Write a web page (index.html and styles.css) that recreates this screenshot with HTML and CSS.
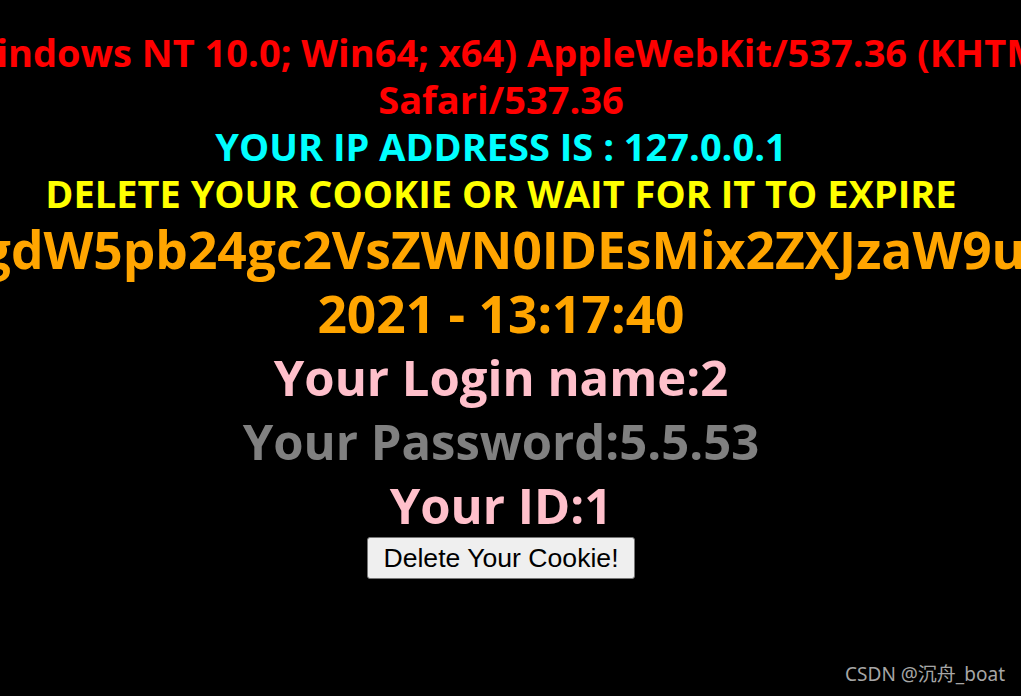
FILE: index.html
```html
<!DOCTYPE html>
<html lang="en">
<head>
<meta charset="utf-8">
<title>Less-21 Cookie Injection</title>
<link rel="stylesheet" href="styles.css">
</head>
<body>
<main class="page">
  <p class="line s4 red">YOUR USER AGENT IS : Mozilla/5.0 (Windows NT 10.0; Win64; x64) AppleWebKit/537.36 (KHTML, like Gecko) Chrome/91.0.4472.77</p>
  <p class="line s4 red">Safari/537.36</p>
  <p class="line s4 cyan">YOUR IP ADDRESS IS : 127.0.0.1</p>
  <p class="line s4 yellow">DELETE YOUR COOKIE OR WAIT FOR IT TO EXPIRE</p>
  <p class="line s5 orange">YOUR COOKIE : uname = JykgdW5pb24gc2VsZWN0IDEsMix2ZXJzaW9uKCkj and expires: Thu 15 Jul</p>
  <p class="line s5 orange">2021 - 13:17:40</p>
  <p class="line s5 pink">Your Login name:2</p>
  <p class="line s5 grey">Your Password:5.5.53</p>
  <p class="line s5 pink">Your ID:1</p>
  <form class="form">
    <button type="button" class="btn">Delete Your Cookie!</button>
  </form>
</main>
<div class="watermark">CSDN @沉舟_boat</div>
</body>
</html>
```
FILE: styles.css
```css
html, body {
  margin: 0;
  padding: 0;
  background: #000;
  overflow: hidden;
  height: 100%;
}
body {
  position: relative;
  font-family: "Open Sans", "Noto Sans", sans-serif;
}
.page {
  width: 3000px;
  margin-left: -999px;
  padding-top: 29px;
  text-align: center;
  font-weight: 700;
}
.line {
  margin: 0;
  white-space: nowrap;
}
.s4 {
  font-size: 38px;
  line-height: 47px;
}
.s5 {
  font-size: 49px;
  line-height: 64px;
}
.red { color: #ff0000; }
.cyan { color: #00ffff; }
.yellow { color: #ffff00; }
.orange {
  color: #ffa500;
  font-size: 51.5px;
}
.pink { color: #ffc0cb; }
.grey { color: #808080; }
.form {
  margin: 0;
  display: flex;
  justify-content: center;
}
.btn {
  font-family: "Liberation Sans", Arial, sans-serif;
  font-weight: 400;
  font-size: 26.6px;
  color: #000;
  background: #efefef;
  border: 1px solid #767676;
  border-radius: 3px;
  height: 42px;
  padding: 0 15px;
  line-height: 1;
}
.watermark {
  position: absolute;
  right: 16px;
  bottom: 9px;
  font-family: "Noto Sans", "Noto Sans CJK SC", sans-serif;
  font-size: 19px;
  color: #a6a6a6;
}
```
